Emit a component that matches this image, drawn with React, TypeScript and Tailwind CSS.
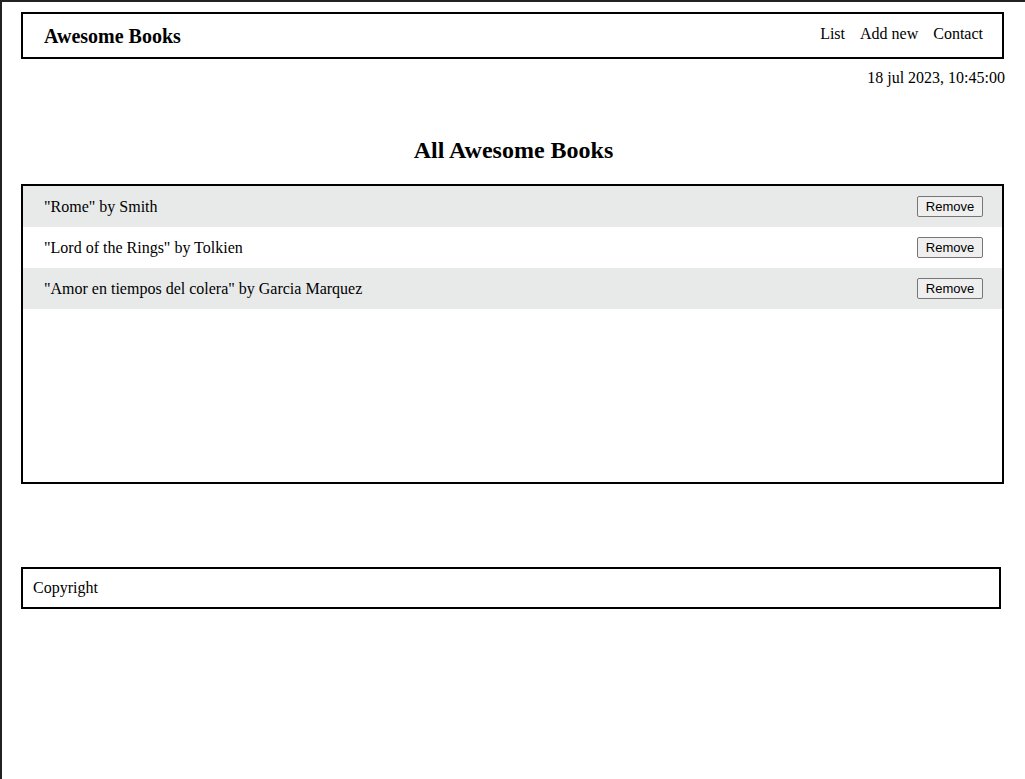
const books = [
  { title: "Rome", author: "Smith" },
  { title: "Lord of the Rings", author: "Tolkien" },
  { title: "Amor en tiempos del colera", author: "Garcia Marquez" },
];

export default function App() {
  return (
    <div
      className="h-[779px] border-t-2 border-l-2 border-[#222222] bg-white text-black text-[16px] overflow-hidden"
      style={{ fontFamily: '"Liberation Serif", "Times New Roman", serif' }}
    >
      <header className="mt-[10px] ml-[19px] mr-[21px] h-[47px] border-2 border-black flex items-center justify-between pl-[21px] pr-[19px]">
        <h1 className="text-[20px] font-bold leading-none mt-[1px]">Awesome Books</h1>
        <nav className="flex gap-[15px] leading-none mb-[4px]">
          <span>List</span>
          <span>Add new</span>
          <span>Contact</span>
        </nav>
      </header>

      <div className="mt-[10px] pr-[20px] text-right leading-[18px]">18 jul 2023, 10:45:00</div>

      <h2 className="mt-[49px] text-center text-[24px] font-bold leading-[29px]">All Awesome Books</h2>

      <section className="mt-[19px] ml-[19px] mr-[21px] h-[300px] border-2 border-black">
        {books.map((b, i) => (
          <div
            key={b.title}
            className={`h-[41px] flex items-center justify-between pl-[21px] pr-[19px] ${
              i % 2 === 0 ? "bg-[#e8eaea]" : "bg-white"
            }`}
          >
            <span>
              "{b.title}" by {b.author}
            </span>
            <button
              className="h-[21px] w-[66px] border border-[#767676] bg-[#efefef] rounded-[2px] text-[13px] leading-none"
              style={{ fontFamily: '"Liberation Sans", Arial, sans-serif' }}
            >
              Remove
            </button>
          </div>
        ))}
      </section>

      <footer className="mt-[83px] ml-[19px] w-[980px] h-[42px] border-2 border-black flex items-center pl-[10px]">
        Copyright
      </footer>
    </div>
  );
}
